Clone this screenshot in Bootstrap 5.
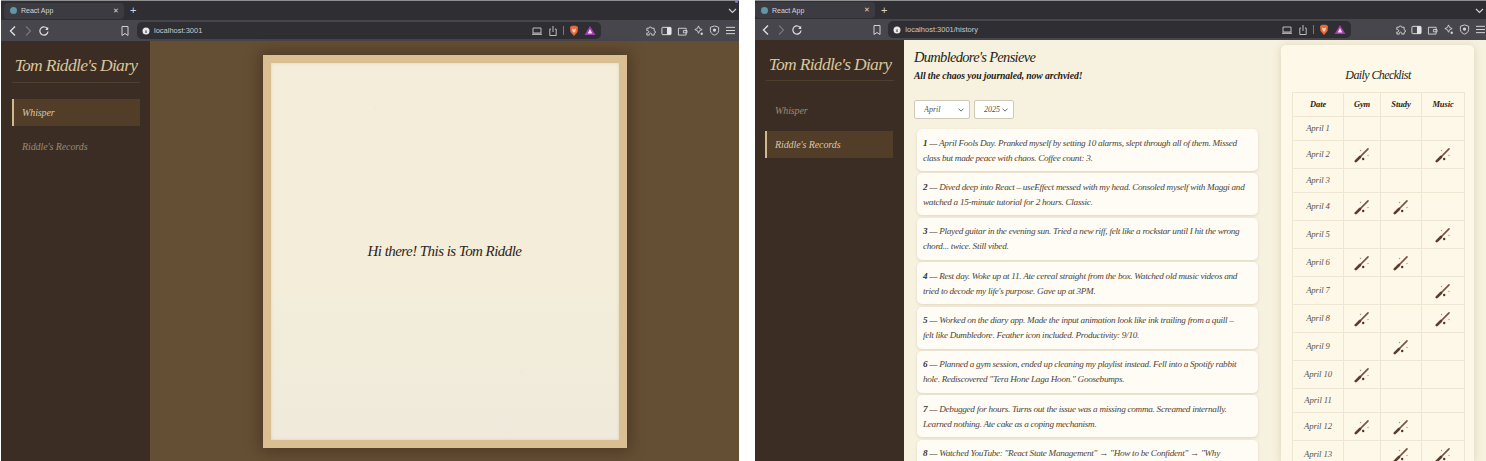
<!doctype html>
<html lang="en">
<head>
<meta charset="utf-8">
<title>React App</title>
<link href="https://cdn.jsdelivr.net/npm/bootstrap@5.3.0/dist/css/bootstrap.min.css" rel="stylesheet">
<script src="https://cdn.jsdelivr.net/npm/bootstrap@5.3.0/dist/js/bootstrap.bundle.min.js"></script>
<style>
html,body{height:461px;overflow:hidden;background:#fff}
.rd-desk{height:461px;padding-left:1px;gap:16px}
.rd-win{height:461px;overflow:hidden;flex:none;background:#2f2e33;border-top:1px solid #8f8f92}
.rd-win-a{width:738px}
.rd-win-b{width:731px}
.rd-tabs{height:19px;padding-left:3px;color:#d5d5d8;font:7px "Liberation Sans",sans-serif}
.rd-win-b .rd-tabs{height:18px;padding-left:0}
.rd-tab{width:120px;height:16px;background:#3c3b41;border-radius:4px;padding:0 5px 0 6px;gap:4px}
.rd-fav{width:7px;height:7px;border-radius:50%;background:#5f97a3}
.rd-plus{font-size:11px;margin-left:6px;line-height:1}
.rd-tabs-end{margin-left:auto;padding-right:2px;position:relative}
.rd-note{position:absolute;right:1px;top:-7px;width:3px;height:3px;border-radius:50%;background:#7d6be0}
.rd-bar{height:21px;background:#47464c;padding-left:7px;color:#d7d7da}
.rd-win-b .rd-bar{padding-left:6px}
.rd-bar svg{flex:none;display:block}
.rd-nav-btn{width:128px;padding-right:6px;gap:5px}
.rd-url{height:17px;width:464px;margin-left:1px;background:#2f2e33;border-radius:5px;padding:0 5px;font:7.5px "Liberation Sans",sans-serif;color:#c9c9cc}
.rd-win-b .rd-url{width:465px;margin-left:0}
.rd-url-text{margin-left:4px}
.rd-url-tools{margin-left:auto;gap:5px}
.rd-sep{width:1px;height:9px;background:#77767b}
.rd-ext{margin-left:44px;gap:5px}
.rd-app{height:420px}
.rd-win-b .rd-app{height:421px}
.rd-side{width:149px;flex:none;background:#3b2d24;font-family:"Liberation Serif",serif;font-style:italic}
.rd-side-title{height:42px;margin:0 10px 16px 11px;border-bottom:1px solid #4e3f30;color:#d9c59b;font-size:17.5px;letter-spacing:-.7px;font-weight:400;line-height:48px;text-align:center;white-space:nowrap}
.rd-win-b .rd-side-title{height:41px}
.rd-side .nav-link{height:27px;width:128px;margin:0 0 7px 11px;padding:0 0 0 8px;line-height:27px;font-size:10px;letter-spacing:-.1px;color:#9c8b70;border-left:2px solid transparent}
.rd-win-b .rd-side .nav-link{margin-left:10px}
.rd-side .nav-link.active{background:#523d29;color:#d9c8a6;border-left-color:#d2b88c}
.rd-stage{flex:1;background:#654f34}
.rd-paper{width:364px;height:393px;border:8px solid #d9bf92;background:
 radial-gradient(circle at 30% 12%,#ebe3cc 0,transparent 1px),
 radial-gradient(circle at 72% 82%,#e8e0ca 0,transparent 1px),
 radial-gradient(circle at 60% 30%,#ebe3cc 0,transparent 1px),
 linear-gradient(180deg,#f4eddb,#f3edda 60%,#efeadb);
 box-shadow:0 0 14px 3px rgba(45,30,15,.45),inset 0 0 3px rgba(170,145,100,.3);
 font:italic 400 15px "Liberation Serif",serif;letter-spacing:-.55px;color:#2d241c}
.rd-main{flex:1;min-width:0;background:#f7f1df;font-family:"Liberation Serif",serif;font-style:italic;color:#2a231d}
.rd-left{flex:1;min-width:0;padding:7px 0 0 10px}
.rd-h1{font-size:14.5px;letter-spacing:-.7px;line-height:20px;font-weight:400;margin:0;color:#241d18}
.rd-h2{font-size:9.7px;letter-spacing:-.1px;line-height:16px;font-weight:700;margin:1px 0 16px;color:#1f1a15}
.rd-filters{gap:4px;margin-bottom:10px}
.rd-filters .form-select{height:19px;font-size:8px;font-style:italic;color:#5a5048;padding:0 0 0 9px;border:1px solid #cfc9b9;border-radius:2px;background-color:#fff;background-size:6px 6px;background-position:right 5px center;font-family:"Liberation Serif",serif}
.rd-sel-m{width:56px}
.rd-sel-y{width:40px}
.rd-entry{margin:0 23px 2.4px 3px;height:42px;padding:6.5px 5px 0 6px;background:#fefcf4;border:0;border-radius:5px;box-shadow:0 1px 3px rgba(120,100,60,.18);font-size:9.2px;letter-spacing:-.29px;line-height:15px;color:#4d443b;white-space:nowrap;display:block;overflow:hidden}
.rd-entry b{color:#3a322b}
.rd-check{width:193px;flex:none;margin:5px 12px 0 0;padding:20px 10px 0 11px;background:#fdf8e8;border:0;border-radius:5px 5px 0 0;box-shadow:0 1px 8px rgba(120,100,60,.22)}
.rd-check h5{font-size:12px;letter-spacing:-.6px;line-height:20px;font-weight:400;text-align:center;margin:0 0 7px;color:#241d18}
.rd-table{--bs-table-bg:transparent;--bs-table-border-color:#eee6d3;margin:0;table-layout:fixed;width:172px;font-size:8.7px;letter-spacing:-.1px;text-align:center;border-color:#eee6d3}
.rd-table th,.rd-table td{padding:0;vertical-align:middle;height:28px;font-style:italic;color:#5c5248;font-weight:400}
.rd-table th{height:24px;color:#2a231d;font-weight:700;font-size:8.5px}
.rd-table tr.rd-short td{height:24px}
.rd-table svg{display:block;margin:0 auto}
</style>
</head>
<body>
<svg width="0" height="0" class="position-absolute">
 <symbol id="i-back" viewBox="0 0 10 12"><path d="M7 1.5 2.5 6 7 10.5" fill="none" stroke="#dedee0" stroke-width="1.4"/></symbol>
 <symbol id="i-fwd" viewBox="0 0 10 12"><path d="M3 1.5 7.5 6 3 10.5" fill="none" stroke="#77767c" stroke-width="1.2"/></symbol>
 <symbol id="i-reload" viewBox="0 0 12 12"><path d="M9.6 4.2A4.1 4.1 0 1 0 10 6.5" fill="none" stroke="#dedee0" stroke-width="1.2"/><path d="M10.2 1.8v3.1H7.2z" fill="#dedee0"/></symbol>
 <symbol id="i-mark" viewBox="0 0 10 12"><path d="M2 1.5h6v9L5 8.5l-3 2z" fill="none" stroke="#d0d0d3" stroke-width="1"/></symbol>
 <symbol id="i-info" viewBox="0 0 8 8"><circle cx="4" cy="4" r="3.5" fill="#e8e8ea"/><path d="M4 3.4v2.6" stroke="#2f2e33"/></symbol>
 <symbol id="i-cast" viewBox="0 0 12 10"><path d="M2 2h8v5H2z" fill="none" stroke="#bdbdc0"/><path d="M1 8.2h10" stroke="#bdbdc0" stroke-width="1.3"/></symbol>
 <symbol id="i-share" viewBox="0 0 10 12"><path d="M3 4H1.8v6.5h6.4V4H7M5 1v6" fill="none" stroke="#bdbdc0"/></symbol>
 <symbol id="i-brave" viewBox="0 0 10 12"><path d="M1 2 3 .8h4L9 2 8.5 7 5 11 1.5 7z" fill="#e8693a"/><path d="M3 3.4 5 4.3 7 3.4 6.6 6 5 8 3.4 6z" fill="#f7cdb6"/></symbol>
 <symbol id="i-tri" viewBox="0 0 12 11"><path d="M6 1 11.5 10H.5z" fill="#a23bb5"/><path d="M6 4 8.4 8.5H3.6z" fill="#f3dfe8"/></symbol>
 <symbol id="i-puzzle" viewBox="0 0 12 12"><path d="M2 3.5h2.4a1.4 1.4 0 1 1 2.8 0H10v2.8a1.4 1.4 0 1 1 0 2.8V11H7.2a1.4 1.4 0 1 0-2.4 0H2V8.6a1.4 1.4 0 1 0 0-2.4z" fill="none" stroke="#d4d4d7"/></symbol>
 <symbol id="i-panel" viewBox="0 0 12 10"><rect x="1" y="1" width="10" height="8" rx="1" fill="none" stroke="#e4e4e6"/><rect x="6.5" y="1" width="4.5" height="8" fill="#e4e4e6"/></symbol>
 <symbol id="i-wallet" viewBox="0 0 12 11"><path d="M1.5 2.5h8.5v7.5H1.5z M7 5h4v2.5H7z" fill="none" stroke="#d4d4d7"/></symbol>
 <symbol id="i-stars" viewBox="0 0 12 12"><path d="M6 1 7.2 3.8 10 5 7.2 6.2 6 9 4.8 6.2 2 5 4.8 3.8z" fill="none" stroke="#d4d4d7"/><circle cx="9.5" cy="9.5" r="1.3" fill="#d4d4d7"/></symbol>
 <symbol id="i-vpn" viewBox="0 0 12 12"><path d="M6 1 10.5 2.5V6C10.500 8.8 8 10.5 6 11 4 10.5 1.5 8.8 1.5 6V2.5z" fill="none" stroke="#d4d4d7"/><circle cx="6" cy="5.5" r="1.8" fill="#d4d4d7"/></symbol>
 <symbol id="i-menu" viewBox="0 0 12 10"><path d="M1 1.5h10M1 5h10M1 8.5h10" stroke="#d4d4d7" stroke-width="1.1"/></symbol>
 <symbol id="i-wand" viewBox="0 0 16 16"><path d="M3 13 14 1.8" stroke="#7a5546" stroke-width="1.7" stroke-linecap="round"/><path d="M1.8 14.2 6 10" stroke="#5f3a2e" stroke-width="2.6" stroke-linecap="round"/><circle cx="9.2" cy="12" r="1.2" fill="#4f342a"/><circle cx="6.5" cy="3.5" r=".7" fill="#a9998a"/><circle cx="14" cy="8.5" r=".7" fill="#a9998a"/></symbol>
</svg>

<div class="rd-desk d-flex">

 <section class="rd-win rd-win-a">
  <div class="rd-tabs d-flex align-items-center">
   <div class="rd-tab d-flex align-items-center"><span class="rd-fav"></span><span>React App</span><span class="ms-auto">✕</span></div>
   <span class="rd-plus">+</span>
   <span class="rd-tabs-end"><svg width="9" height="6" viewBox="0 0 9 6"><path d="M1 1 4.5 4.5 8 1" fill="none" stroke="#cfcfd2" stroke-width="1.2"/></svg><span class="rd-note"></span></span>
  </div>
  <div class="rd-bar d-flex align-items-center">
   <div class="rd-nav-btn d-flex align-items-center"><svg width="10" height="12"><use href="#i-back"/></svg><svg width="10" height="12"><use href="#i-fwd"/></svg><svg width="12" height="12"><use href="#i-reload"/></svg><svg width="10" height="12" class="ms-auto"><use href="#i-mark"/></svg></div>
   <div class="rd-url d-flex align-items-center"><svg width="8" height="8"><use href="#i-info"/></svg><span class="rd-url-text">localhost:3001</span>
    <div class="rd-url-tools d-flex align-items-center"><svg width="12" height="10"><use href="#i-cast"/></svg><svg width="10" height="12"><use href="#i-share"/></svg><span class="rd-sep"></span><svg width="10" height="12"><use href="#i-brave"/></svg><svg width="12" height="11"><use href="#i-tri"/></svg></div>
   </div>
   <div class="rd-ext d-flex align-items-center"><svg width="11" height="11"><use href="#i-puzzle"/></svg><svg width="11" height="10"><use href="#i-panel"/></svg><svg width="11" height="10"><use href="#i-wallet"/></svg><svg width="11" height="11"><use href="#i-stars"/></svg><svg width="11" height="11"><use href="#i-vpn"/></svg><svg width="11" height="9"><use href="#i-menu"/></svg></div>
  </div>
  <div class="rd-app d-flex">
   <aside class="rd-side">
    <div class="rd-side-title">Tom Riddle's Diary</div>
    <nav class="nav flex-column"><a class="nav-link active" href="#">Whisper</a><a class="nav-link" href="#">Riddle's Records</a></nav>
   </aside>
   <main class="rd-stage d-flex align-items-center justify-content-center">
    <div class="rd-paper d-flex align-items-center justify-content-center">Hi there! This is Tom Riddle</div>
   </main>
  </div>
 </section>

 <section class="rd-win rd-win-b">
  <div class="rd-tabs d-flex align-items-center">
   <div class="rd-tab d-flex align-items-center"><span class="rd-fav"></span><span>React App</span><span class="ms-auto">✕</span></div>
   <span class="rd-plus">+</span>
   <span class="rd-tabs-end"><svg width="9" height="6" viewBox="0 0 9 6"><path d="M1 1 4.5 4.5 8 1" fill="none" stroke="#cfcfd2" stroke-width="1.2"/></svg></span>
  </div>
  <div class="rd-bar d-flex align-items-center">
   <div class="rd-nav-btn d-flex align-items-center"><svg width="10" height="12"><use href="#i-back"/></svg><svg width="10" height="12"><use href="#i-fwd"/></svg><svg width="12" height="12"><use href="#i-reload"/></svg><svg width="10" height="12" class="ms-auto"><use href="#i-mark"/></svg></div>
   <div class="rd-url d-flex align-items-center"><svg width="8" height="8"><use href="#i-info"/></svg><span class="rd-url-text">localhost:3001/history</span>
    <div class="rd-url-tools d-flex align-items-center"><svg width="12" height="10"><use href="#i-cast"/></svg><svg width="10" height="12"><use href="#i-share"/></svg><span class="rd-sep"></span><svg width="10" height="12"><use href="#i-brave"/></svg><svg width="12" height="11"><use href="#i-tri"/></svg></div>
   </div>
   <div class="rd-ext d-flex align-items-center"><svg width="11" height="11"><use href="#i-puzzle"/></svg><svg width="11" height="10"><use href="#i-panel"/></svg><svg width="11" height="10"><use href="#i-wallet"/></svg><svg width="11" height="11"><use href="#i-stars"/></svg><svg width="11" height="11"><use href="#i-vpn"/></svg><svg width="11" height="9"><use href="#i-menu"/></svg></div>
  </div>
  <div class="rd-app d-flex">
   <aside class="rd-side">
    <div class="rd-side-title">Tom Riddle's Diary</div>
    <nav class="nav flex-column"><a class="nav-link" href="#">Whisper</a><a class="nav-link active" href="#">Riddle's Records</a></nav>
   </aside>
   <main class="rd-main d-flex">
    <div class="rd-left">
     <h1 class="rd-h1">Dumbledore's Pensieve</h1>
     <h2 class="rd-h2">All the chaos you journaled, now archvied!</h2>
     <div class="rd-filters d-flex">
      <select class="form-select rd-sel-m"><option>April</option></select>
      <select class="form-select rd-sel-y"><option>2025</option></select>
     </div>
     <div class="card rd-entry"><b>1</b> — April Fools Day. Pranked myself by setting 10 alarms, slept through all of them. Missed<br>class but made peace with chaos. Coffee count: 3.</div>
     <div class="card rd-entry"><b>2</b> — Dived deep into React – useEffect messed with my head. Consoled myself with Maggi and<br>watched a 15-minute tutorial for 2 hours. Classic.</div>
     <div class="card rd-entry"><b>3</b> — Played guitar in the evening sun. Tried a new riff, felt like a rockstar until I hit the wrong<br>chord... twice. Still vibed.</div>
     <div class="card rd-entry"><b>4</b> — Rest day. Woke up at 11. Ate cereal straight from the box. Watched old music videos and<br>tried to decode my life's purpose. Gave up at 3PM.</div>
     <div class="card rd-entry"><b>5</b> — Worked on the diary app. Made the input animation look like ink trailing from a quill –<br>felt like Dumbledore. Feather icon included. Productivity: 9/10.</div>
     <div class="card rd-entry"><b>6</b> — Planned a gym session, ended up cleaning my playlist instead. Fell into a Spotify rabbit<br>hole. Rediscovered "Tera Hone Laga Hoon." Goosebumps.</div>
     <div class="card rd-entry"><b>7</b> — Debugged for hours. Turns out the issue was a missing comma. Screamed internally.<br>Learned nothing. Ate cake as a coping mechanism.</div>
     <div class="card rd-entry"><b>8</b> — Watched YouTube: "React State Management" → "How to be Confident" → "Why</div>
    </div>
    <div class="card rd-check">
     <h5>Daily Checklist</h5>
     <table class="table table-bordered rd-table">
      <colgroup><col style="width:51px"><col style="width:37px"><col style="width:41px"><col style="width:43px"></colgroup>
      <thead><tr><th>Date</th><th>Gym</th><th>Study</th><th>Music</th></tr></thead>
      <tbody>
       <tr class="rd-short"><td>April 1</td><td></td><td></td><td></td></tr>
       <tr><td>April 2</td><td><svg width="16" height="16"><use href="#i-wand"/></svg></td><td></td><td><svg width="16" height="16"><use href="#i-wand"/></svg></td></tr>
       <tr class="rd-short"><td>April 3</td><td></td><td></td><td></td></tr>
       <tr><td>April 4</td><td><svg width="16" height="16"><use href="#i-wand"/></svg></td><td><svg width="16" height="16"><use href="#i-wand"/></svg></td><td></td></tr>
       <tr><td>April 5</td><td></td><td></td><td><svg width="16" height="16"><use href="#i-wand"/></svg></td></tr>
       <tr><td>April 6</td><td><svg width="16" height="16"><use href="#i-wand"/></svg></td><td><svg width="16" height="16"><use href="#i-wand"/></svg></td><td></td></tr>
       <tr><td>April 7</td><td></td><td></td><td><svg width="16" height="16"><use href="#i-wand"/></svg></td></tr>
       <tr><td>April 8</td><td><svg width="16" height="16"><use href="#i-wand"/></svg></td><td></td><td><svg width="16" height="16"><use href="#i-wand"/></svg></td></tr>
       <tr><td>April 9</td><td></td><td><svg width="16" height="16"><use href="#i-wand"/></svg></td><td></td></tr>
       <tr><td>April 10</td><td><svg width="16" height="16"><use href="#i-wand"/></svg></td><td></td><td></td></tr>
       <tr class="rd-short"><td>April 11</td><td></td><td></td><td></td></tr>
       <tr><td>April 12</td><td><svg width="16" height="16"><use href="#i-wand"/></svg></td><td><svg width="16" height="16"><use href="#i-wand"/></svg></td><td></td></tr>
       <tr><td>April 13</td><td></td><td><svg width="16" height="16"><use href="#i-wand"/></svg></td><td><svg width="16" height="16"><use href="#i-wand"/></svg></td></tr>
      </tbody>
     </table>
    </div>
   </main>
  </div>
 </section>
</div>
</body>
</html>
